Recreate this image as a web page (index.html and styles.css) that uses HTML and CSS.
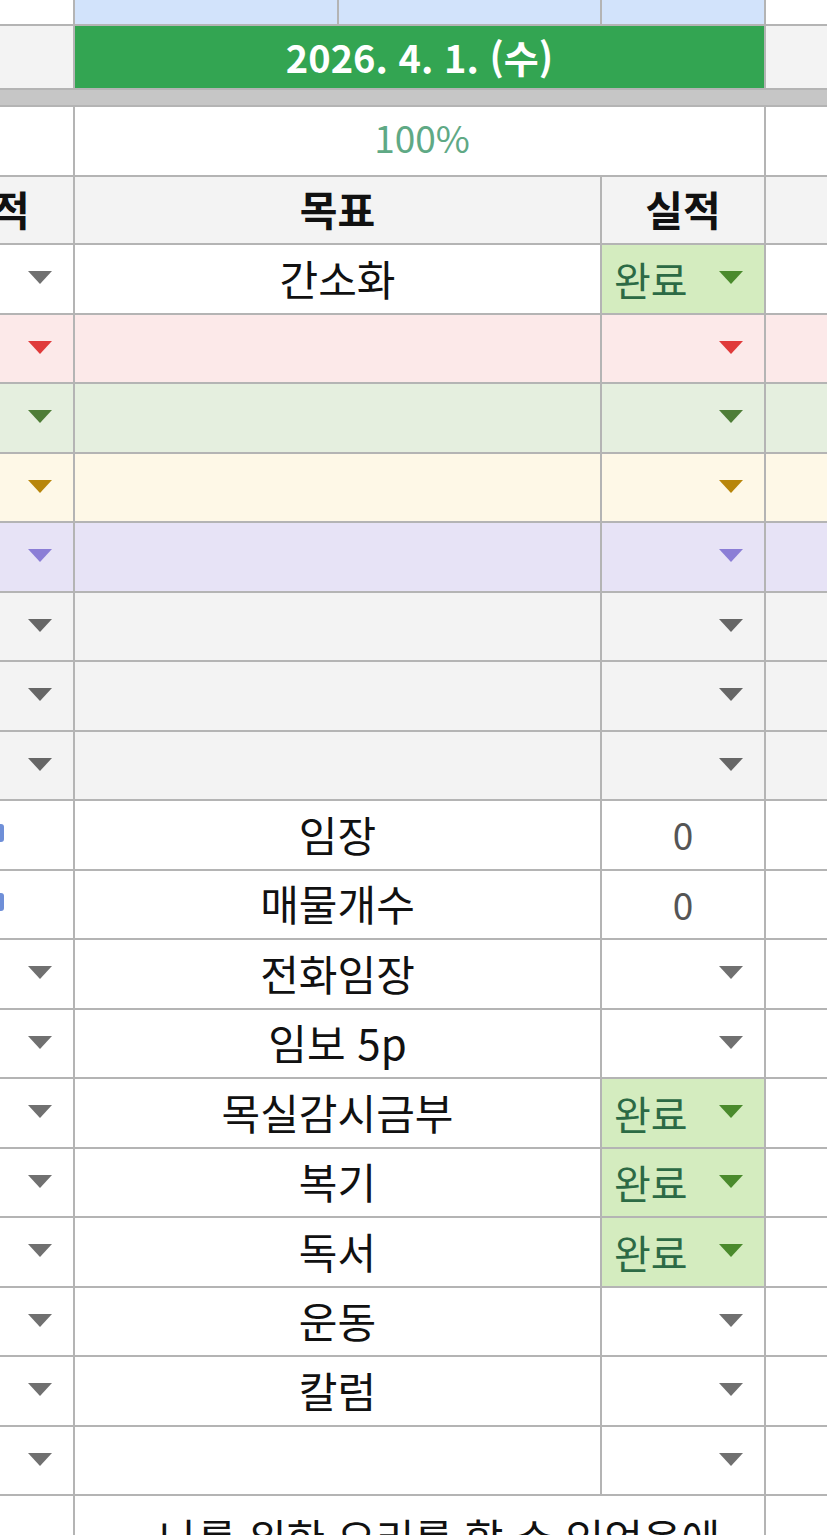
FILE: index.html
```html
<!DOCTYPE html>
<html lang="ko">
<head>
<meta charset="utf-8">
<title>Sheet</title>
<link rel="stylesheet" href="styles.css">
</head>
<body>
<div class="sheet">
  <!-- top blue row -->
  <div class="row top">
    <div class="c white"></div>
    <div class="c blue"></div>
    <div class="c blue"></div>
    <div class="c blue"></div>
    <div class="c white"></div>
  </div>
  <!-- date row -->
  <div class="row date">
    <div class="c grey"></div>
    <div class="c green span3">2026. 4. 1. (수)</div>
    <div class="c grey"></div>
  </div>
  <div class="freeze"></div>
  <!-- percent row -->
  <div class="row">
    <div class="c"></div>
    <div class="c span3 pct">100%</div>
    <div class="c"></div>
  </div>
  <!-- header row -->
  <div class="row head">
    <div class="c left"><div class="shadow">실적</div></div>
    <div class="c span2">목표</div>
    <div class="c">실적</div>
    <div class="c"></div>
  </div>

  <div class="row">
    <div class="c left"><div class="shadow act"><span class="dd"></span></div></div>
    <div class="c span2 goal">간소화</div>
    <div class="c act done"><span>완료</span><span class="dd"></span></div>
    <div class="c"></div>
  </div>
  <div class="row pink">
    <div class="c left"><div class="shadow act"><span class="dd"></span></div></div>
    <div class="c span2 goal"></div>
    <div class="c act"><span class="dd"></span></div>
    <div class="c"></div>
  </div>
  <div class="row mint">
    <div class="c left"><div class="shadow act"><span class="dd"></span></div></div>
    <div class="c span2 goal"></div>
    <div class="c act"><span class="dd"></span></div>
    <div class="c"></div>
  </div>
  <div class="row cream">
    <div class="c left"><div class="shadow act"><span class="dd"></span></div></div>
    <div class="c span2 goal"></div>
    <div class="c act"><span class="dd"></span></div>
    <div class="c"></div>
  </div>
  <div class="row lilac">
    <div class="c left"><div class="shadow act"><span class="dd"></span></div></div>
    <div class="c span2 goal"></div>
    <div class="c act"><span class="dd"></span></div>
    <div class="c"></div>
  </div>
  <div class="row ash">
    <div class="c left"><div class="shadow act"><span class="dd"></span></div></div>
    <div class="c span2 goal"></div>
    <div class="c act"><span class="dd"></span></div>
    <div class="c"></div>
  </div>
  <div class="row ash">
    <div class="c left"><div class="shadow act"><span class="dd"></span></div></div>
    <div class="c span2 goal"></div>
    <div class="c act"><span class="dd"></span></div>
    <div class="c"></div>
  </div>
  <div class="row ash">
    <div class="c left"><div class="shadow act"><span class="dd"></span></div></div>
    <div class="c span2 goal"></div>
    <div class="c act"><span class="dd"></span></div>
    <div class="c"></div>
  </div>

  <div class="row">
    <div class="c left"><span class="sliver"></span></div>
    <div class="c span2 goal">임장</div>
    <div class="c num">0</div>
    <div class="c"></div>
  </div>
  <div class="row">
    <div class="c left"><span class="sliver"></span></div>
    <div class="c span2 goal">매물개수</div>
    <div class="c num">0</div>
    <div class="c"></div>
  </div>
  <div class="row">
    <div class="c left"><div class="shadow act"><span class="dd"></span></div></div>
    <div class="c span2 goal">전화임장</div>
    <div class="c act"><span class="dd"></span></div>
    <div class="c"></div>
  </div>
  <div class="row">
    <div class="c left"><div class="shadow act"><span class="dd"></span></div></div>
    <div class="c span2 goal">임보 5p</div>
    <div class="c act"><span class="dd"></span></div>
    <div class="c"></div>
  </div>
  <div class="row">
    <div class="c left"><div class="shadow act"><span class="dd"></span></div></div>
    <div class="c span2 goal">목실감시금부</div>
    <div class="c act done"><span>완료</span><span class="dd"></span></div>
    <div class="c"></div>
  </div>
  <div class="row">
    <div class="c left"><div class="shadow act"><span class="dd"></span></div></div>
    <div class="c span2 goal">복기</div>
    <div class="c act done"><span>완료</span><span class="dd"></span></div>
    <div class="c"></div>
  </div>
  <div class="row">
    <div class="c left"><div class="shadow act"><span class="dd"></span></div></div>
    <div class="c span2 goal">독서</div>
    <div class="c act done"><span>완료</span><span class="dd"></span></div>
    <div class="c"></div>
  </div>
  <div class="row">
    <div class="c left"><div class="shadow act"><span class="dd"></span></div></div>
    <div class="c span2 goal">운동</div>
    <div class="c act"><span class="dd"></span></div>
    <div class="c"></div>
  </div>
  <div class="row">
    <div class="c left"><div class="shadow act"><span class="dd"></span></div></div>
    <div class="c span2 goal">칼럼</div>
    <div class="c act"><span class="dd"></span></div>
    <div class="c"></div>
  </div>
  <div class="row">
    <div class="c left"><div class="shadow act"><span class="dd"></span></div></div>
    <div class="c span2 goal"></div>
    <div class="c act"><span class="dd"></span></div>
    <div class="c"></div>
  </div>
  <div class="row note">
    <div class="c"></div>
    <div class="c span3 memo">나를 위한 요리를 할 수 있었음에</div>
    <div class="c"></div>
  </div>
</div>
</body>
</html>
```

FILE: styles.css
```css
html, body {
  margin: 0;
  padding: 0;
  overflow: hidden;
  background: #ffffff;
}

body {
  width: 827px;
  height: 1535px;
  font-family: "Noto Sans CJK KR", "Noto Sans", sans-serif;
  color: #111111;
}

.sheet {
  display: grid;
  grid-template-columns: 73px 262px 261px 162px 61px;
  grid-template-rows: 24px 62px 15px 68px 66px;
  grid-auto-rows: 67.5px;
  gap: 2px;
  background: #b4b4b4;
  width: 827px;
}

.row {
  display: contents;
}

.c {
  background: #ffffff;
  display: flex;
  align-items: center;
  justify-content: center;
  font-size: 42px;
  line-height: 1;
  overflow: hidden;
  white-space: nowrap;
  min-width: 0;
}

.span2 { grid-column: span 2; }
.span3 { grid-column: span 3; }

.c.blue { background: #d2e3fb; }
.c.grey { background: #f3f3f3; }
.c.green {
  background: #33a552;
  color: #ffffff;
  font-size: 38px;
  font-weight: 700;
  padding-bottom: 0;
}

.freeze {
  grid-column: 1 / -1;
  background: #c6c6c6;
}

.pct {
  color: #5fa985;
  font-size: 37px;
  padding-left: 5px;
  padding-bottom: 8px;
}

.head .c {
  background: #f3f3f3;
  font-weight: 700;
  font-size: 41px;
  padding-bottom: 3px;
}

/* clipped previous-day column on the left */
.c.left {
  justify-content: flex-start;
}
.shadow {
  flex: 0 0 162px;
  width: 162px;
  margin-left: -89px;
  height: 100%;
  display: flex;
  align-items: center;
  justify-content: center;
}

.act {
  padding: 0 21px 0 13px;
  box-sizing: border-box;
}
.shadow.act,
.c.act {
  justify-content: flex-end;
}
.c.act.done {
  justify-content: space-between;
  background: #d4ecbf;
  color: #2c6a45;
  font-size: 40px;
  padding-left: 12px;
}

.dd {
  width: 0;
  height: 0;
  border-left: 12px solid transparent;
  border-right: 12px solid transparent;
  border-top: 13px solid #707070;
  margin-bottom: 2px;
}
.done .dd { border-top-color: #4a8a2c; }

.num {
  color: #555555;
  font-size: 37px;
}

.sliver {
  display: block;
  width: 4px;
  height: 18px;
  margin-top: -4px;
  background: #6f8fd8;
  border-radius: 0 3px 3px 0;
}

.goal {
  padding-bottom: 2px;
}

/* row tints */
.pink .c { background: #fce9e9; }
.pink .dd { border-top-color: #e03a3a; }
.mint .c { background: #e5efdf; }
.mint .dd { border-top-color: #4e7d37; }
.cream .c { background: #fef8e7; }
.cream .dd { border-top-color: #b8860b; }
.lilac .c { background: #e7e3f6; }
.lilac .dd { border-top-color: #8b7ed6; }
.ash .c { background: #f3f3f3; }
.ash .dd { border-top-color: #666666; }

.memo {
  align-items: flex-start;
  padding-top: 20px;
  padding-left: 40px;
  box-sizing: border-box;
}
```
